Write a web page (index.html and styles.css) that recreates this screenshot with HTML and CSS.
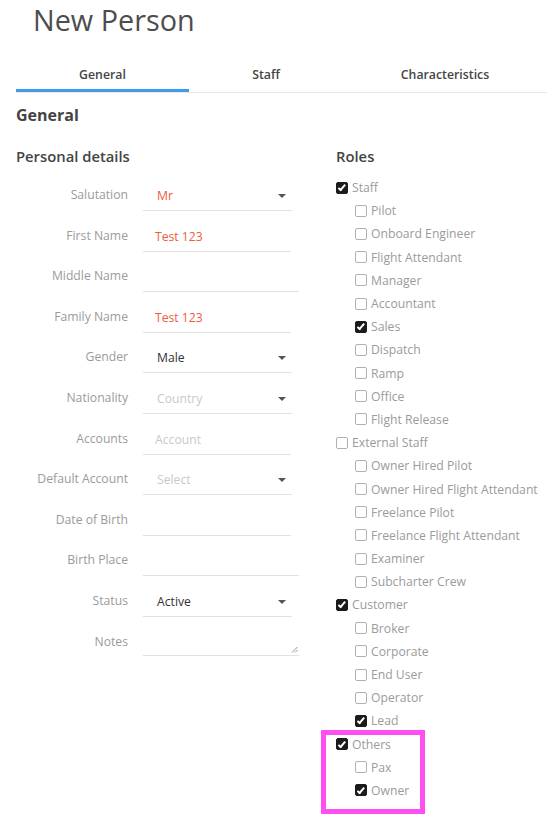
FILE: index.html
```html
<!DOCTYPE html>
<html>
<head>
<meta charset="utf-8">
<link rel="stylesheet" href="styles.css">
</head>
<body>
<div class="page">
  <h1 class="title">New Person</h1>
  <div class="tabs">
    <div class="tab active">General</div>
    <div class="tab">Staff</div>
    <div class="tab">Characteristics</div>
  </div>
  <h2 class="section">General</h2>
  <div class="columns">
    <div class="col-left">
      <h3 class="sub">Personal details</h3>
      <div class="form">
        <div class="row"><label>Salutation</label><div class="field select"><span class="val red">Mr</span><span class="caret"></span></div></div>
        <div class="row"><label>First Name</label><div class="field text"><span class="val red">Test 123</span></div></div>
        <div class="row"><label>Middle Name</label><div class="field text wide"></div></div>
        <div class="row"><label>Family Name</label><div class="field text"><span class="val red">Test 123</span></div></div>
        <div class="row"><label>Gender</label><div class="field select"><span class="val">Male</span><span class="caret"></span></div></div>
        <div class="row"><label>Nationality</label><div class="field select"><span class="val ph">Country</span><span class="caret"></span></div></div>
        <div class="row"><label>Accounts</label><div class="field text"><span class="val ph">Account</span></div></div>
        <div class="row"><label>Default Account</label><div class="field select"><span class="val ph">Select</span><span class="caret"></span></div></div>
        <div class="row"><label>Date of Birth</label><div class="field text"></div></div>
        <div class="row"><label>Birth Place</label><div class="field text wide"></div></div>
        <div class="row"><label>Status</label><div class="field select"><span class="val">Active</span><span class="caret"></span></div></div>
        <div class="row"><label>Notes</label><div class="field text wide notes"><svg class="grip" width="7" height="7" viewBox="0 0 7 7"><path d="M6.5 1 L1 6.5 M6.5 4 L4 6.5" stroke="#888" stroke-width="0.9" fill="none"/></svg></div></div>
      </div>
    </div>
    <div class="col-right">
      <h3 class="sub">Roles</h3>
      <ul class="roles main">
        <li class="top"><span class="cb on"></span>Staff</li>
        <li class="child"><span class="cb"></span>Pilot</li>
        <li class="child"><span class="cb"></span>Onboard Engineer</li>
        <li class="child"><span class="cb"></span>Flight Attendant</li>
        <li class="child"><span class="cb"></span>Manager</li>
        <li class="child"><span class="cb"></span>Accountant</li>
        <li class="child"><span class="cb on"></span>Sales</li>
        <li class="child"><span class="cb"></span>Dispatch</li>
        <li class="child"><span class="cb"></span>Ramp</li>
        <li class="child"><span class="cb"></span>Office</li>
        <li class="child"><span class="cb"></span>Flight Release</li>
        <li class="top"><span class="cb"></span>External Staff</li>
        <li class="child"><span class="cb"></span>Owner Hired Pilot</li>
        <li class="child"><span class="cb"></span>Owner Hired Flight Attendant</li>
        <li class="child"><span class="cb"></span>Freelance Pilot</li>
        <li class="child"><span class="cb"></span>Freelance Flight Attendant</li>
        <li class="child"><span class="cb"></span>Examiner</li>
        <li class="child"><span class="cb"></span>Subcharter Crew</li>
        <li class="top"><span class="cb on"></span>Customer</li>
        <li class="child"><span class="cb"></span>Broker</li>
        <li class="child"><span class="cb"></span>Corporate</li>
        <li class="child"><span class="cb"></span>End User</li>
        <li class="child"><span class="cb"></span>Operator</li>
        <li class="child"><span class="cb on"></span>Lead</li>
      </ul>
      <ul class="roles highlight">
        <li class="top"><span class="cb on"></span>Others</li>
        <li class="child"><span class="cb"></span>Pax</li>
        <li class="child"><span class="cb on"></span>Owner</li>
      </ul>
    </div>
  </div>
</div>
</body>
</html>
```

FILE: styles.css
```css
*, *::before, *::after { box-sizing: border-box; }
html, body { margin: 0; padding: 0; background: #fff; }
body {
  font-family: "Open Sans", "Liberation Sans", sans-serif;
  color: #444;
  width: 547px;
}
.page { padding-left: 16px; padding-bottom: 24px; }
.title {
  margin: 0;
  padding: 0 0 0 17px;
  font-size: 28.8px;
  line-height: 39.2px;
  font-weight: 400;
  color: #4d4d4d;
  height: 56px;
}
.tabs {
  display: grid;
  grid-template-columns: 173px 154px 204px;
  border-bottom: 1px solid #e8e8e8;
}
.tab {
  text-align: center;
  font-size: 12.3px;
  font-weight: 600;
  color: #444;
  height: 36px;
  line-height: 36px;
  padding-top: 1px;
}
.tab.active { box-shadow: inset 0 -3px 0 #3d9be9; }
.section {
  margin: 0;
  font-size: 16px;
  font-weight: 700;
  color: #444;
  line-height: 22px;
  padding-top: 11px;
}
.columns { display: flex; }
.col-left { width: 320px; }
.sub {
  margin: 0;
  font-size: 14.8px;
  font-weight: 600;
  color: #444;
  line-height: 20px;
  padding-top: 20px;
  height: 56px;
}
.form { display: flex; flex-direction: column; margin-top: -4px; }
.row {
  display: flex;
  height: 40.6px;
  align-items: flex-start;
}
.row label {
  width: 112px;
  text-align: right;
  font-size: 12.2px;
  color: #9b9b9b;
  line-height: 33px;
  margin-right: 15px;
  white-space: nowrap;
}
.field {
  position: relative;
  height: 33px;
  border-bottom: 1px solid #e2e2e2;
  width: 148px;
  display: flex;
  align-items: center;
  padding-top: 3px;
  font-size: 12.2px;
}
.field.wide { width: 156px; }
.field.select { width: 149px; padding-left: 14px; }
.field.text { padding-left: 12px; }
.val { color: #333; }
.val.red { color: #ef5b3d; }
.val.ph { color: #c9c9c9; }
.caret {
  position: absolute;
  right: 6px;
  top: 16px;
  width: 0; height: 0;
  border-left: 4.5px solid transparent;
  border-right: 4.5px solid transparent;
  border-top: 4.5px solid #555;
}
.notes { height: 31px; }
.grip { position: absolute; right: 1px; bottom: 2px; }
.roles {
  list-style: none;
  margin: 0;
  padding: 0;
  font-size: 12.2px;
  color: #9b9b9b;
}
.roles.main { margin-top: -6px; }
.roles li {
  height: 23.2px;
  display: flex;
  align-items: center;
  white-space: nowrap;
}
.roles li.child { padding-left: 19px; }
.cb {
  width: 12px;
  height: 12px;
  border: 1px solid #b0b0b0;
  border-radius: 2px;
  margin-right: 4px;
  flex: none;
  position: relative;
  background: #fff;
}
.cb.on { background: #1b1b1b; border-color: #1b1b1b; }
.cb.on::after {
  content: "";
  position: absolute;
  left: 3px;
  top: 0.5px;
  width: 4px;
  height: 7.5px;
  border-right: 2px solid #fff;
  border-bottom: 2px solid #fff;
  transform: rotate(40deg);
}
.highlight { position: relative; }
.highlight::after {
  content: "";
  position: absolute;
  left: -15px;
  top: -3px;
  width: 104px;
  height: 84px;
  border: 5px solid #ff4ff3;
  pointer-events: none;
}
```
